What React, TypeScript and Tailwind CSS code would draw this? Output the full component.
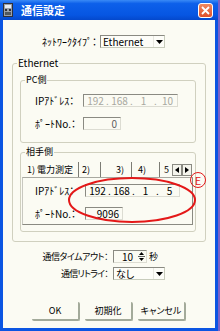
import React from 'react';

const jp = "font-['Noto_Sans_CJK_JP','Noto_Sans',sans-serif] [font-feature-settings:'palt']";

function DownArrow() {
  return (
    <svg width="7" height="4" viewBox="0 0 7 4">
      <path d="M0 0h7L3.5 4z" fill="#000" />
    </svg>
  );
}

function Select({ width, children }: { width: string; children: React.ReactNode }) {
  return (
    <div className={`flex h-[13px] items-stretch border-t border-l border-[#8a8a82] border-b border-r border-b-[#c8ccbc] border-r-[#c8ccbc] bg-[#fdfdf8] ${width}`}>
      <div className="flex flex-1 items-center whitespace-nowrap pl-[2px] leading-[11px]">{children}</div>
      <div className="flex w-[11px] items-center justify-center border-l border-[#e8e8e0]">
        <DownArrow />
      </div>
    </div>
  );
}

function IpField({ parts, disabled }: { parts: string[]; disabled?: boolean }) {
  return (
    <div className={`flex h-[13px] w-[95px] items-center border-t border-l border-[#8a8a82] border-b border-r border-b-[#dcdcd2] border-r-[#dcdcd2] pl-[2px] ${disabled ? 'text-[#a8a8a0]' : 'text-black'}`}>
      {parts.map((p, i) => (
        <React.Fragment key={i}>
          {i > 0 && <span className="w-[5px] text-center">.</span>}
          <span className="w-[19px] text-center">{p}</span>
        </React.Fragment>
      ))}
    </div>
  );
}

function PortField({ value, dim }: { value: string; dim?: boolean }) {
  return (
    <div className={`flex h-[13px] w-[38px] items-center justify-end border-t border-l border-[#8a8a82] border-b border-r border-b-[#dcdcd2] border-r-[#dcdcd2] pr-[3px] ${dim ? 'text-[#606060]' : 'text-black'}`}>
      {value}
    </div>
  );
}

function Button({ children }: { children: React.ReactNode }) {
  return (
    <div className="flex h-[19px] w-[48px] items-center justify-center whitespace-nowrap rounded-[2px] border-r-2 border-b-2 border-[#a3aa9a] text-[9px]">
      {children}
    </div>
  );
}

function Tab({ width, pad, children, last }: { width: string; pad: string; children: React.ReactNode; last?: boolean }) {
  return (
    <div className={`flex h-[15px] items-center overflow-hidden whitespace-nowrap text-[9px] ${last ? '' : 'border-r border-[#7c7c74]'} ${width} ${pad}`}>
      {children}
    </div>
  );
}

export default function App() {
  return (
    <div className={`relative flex h-[331px] w-[220px] overflow-hidden bg-[#7a62c8] text-[10px] leading-[12px] text-black ${jp}`}>
      <div className="flex h-full w-[218px] flex-col">
        {/* title bar */}
        <div className="flex h-[20px] shrink-0 items-center bg-[linear-gradient(180deg,#3a8af6_0%,#0d60ea_18%,#0656e2_75%,#0448cc_100%)] pl-[3px]">
          <svg width="10" height="14" viewBox="0 0 10 14">
            <rect x="0.5" y="0.5" width="9" height="13" fill="#9aa0a8" stroke="#303038" />
            <rect x="2" y="2" width="6" height="3" fill="#e8ecf0" />
            <rect x="2" y="6" width="2" height="2" fill="#303038" />
            <rect x="6" y="6" width="2" height="2" fill="#303038" />
            <rect x="2" y="9" width="6" height="3" fill="#505860" />
          </svg>
          <span className="ml-[8px] text-[11px] font-bold text-white">通信設定</span>
          <div className="ml-auto mr-[5px] flex h-[15px] w-[15px] items-center justify-center rounded-[3px] border border-white bg-[linear-gradient(180deg,#f08a60,#e0502a)]">
            <svg width="9" height="9" viewBox="0 0 9 9">
              <path d="M1 1l7 7M8 1L1 8" stroke="#fff" strokeWidth="1.8" />
            </svg>
          </div>
        </div>

        {/* body */}
        <div className="flex flex-1 flex-col border-x-[3px] border-b-[3px] border-[#0b55e2] bg-[#fbfbf3]">
          <div className="mt-[15px] flex items-center">
            <span className="w-[94px] whitespace-nowrap text-right">ﾈｯﾄﾜｰｸﾀｲﾌﾟ：</span>
            <div className="ml-[3px]">
              <Select width="w-[65px]">Ethernet</Select>
            </div>
          </div>

          <fieldset className="mt-[9px] ml-[9px] w-[194px] rounded-[3px] border border-[#d0d0bf] pb-[9px]">
            <legend className="ml-[4px] px-[1px]">Ethernet</legend>

            <fieldset className="mt-[5px] ml-[7px] w-[176px] rounded-[3px] border border-[#d0d0bf] pb-[12px]">
              <legend className="ml-[4px] px-[1px] text-[9px]">PC側</legend>
              <div className="mt-[8px] flex items-center">
                <span className="ml-[14px] w-[48px] whitespace-nowrap">IPｱﾄﾞﾚｽ：</span>
                <IpField parts={['192', '168', '1', '10']} disabled />
              </div>
              <div className="mt-[10px] flex items-center">
                <span className="ml-[14px] w-[48px] whitespace-nowrap">ﾎﾟｰﾄNo.：</span>
                <PortField value="0" dim />
              </div>
            </fieldset>

            <fieldset className="mt-[3px] ml-[7px] w-[176px] rounded-[3px] border border-[#d0d0bf] pb-[6px]">
              <legend className="ml-[4px] px-[1px] text-[9px]">相手側</legend>
              <div className="mt-[4px] ml-[1px] flex w-[171px] items-center">
                <Tab width="w-[57px]" pad="pl-[5px]">1) 電力測定</Tab>
                <Tab width="w-[22px]" pad="pl-[3px]">2)</Tab>
                <Tab width="w-[31px]" pad="pl-[15px]">3)</Tab>
                <Tab width="w-[28px]" pad="pl-[6px]">4)</Tab>
                <Tab width="w-[12px]" pad="pl-[4px]" last>5</Tab>
                <div className="flex h-[12px] w-[10px] items-center justify-center border border-[#8a8a82] bg-[#f4f4ec]">
                  <svg width="4" height="6" viewBox="0 0 4 6"><path d="M4 0v6L0 3z" fill="#000" /></svg>
                </div>
                <div className="flex h-[12px] w-[10px] items-center justify-center border border-[#8a8a82] bg-[#f4f4ec]">
                  <svg width="4" height="6" viewBox="0 0 4 6"><path d="M0 0v6l4-3z" fill="#000" /></svg>
                </div>
              </div>
              <div className="ml-[1px] w-[171px] border border-t-[#a8a8a0] border-l-[#c8c8c0] border-r-[#8a8a82] border-b-[#8a8a82] pt-[6px] pb-[4px]">
                <div className="flex items-center">
                  <span className="ml-[12px] w-[50px] whitespace-nowrap">IPｱﾄﾞﾚｽ：</span>
                  <IpField parts={['192', '168', '1', '5']} />
                </div>
                <div className="mt-[10px] flex items-center">
                  <span className="ml-[12px] w-[50px] whitespace-nowrap">ﾎﾟｰﾄNo.：</span>
                  <PortField value="9096" />
                </div>
              </div>
            </fieldset>
          </fieldset>

          <div className="mt-[8px] flex items-center">
            <span className="w-[105px] whitespace-nowrap text-right text-[9px] tracking-[-0.5px]">通信タイムアウト：</span>
            <div className="ml-[5px] flex h-[13px] w-[34px] items-stretch border-t border-l border-[#8a8a82] border-b border-r border-b-[#dcdcd2] border-r-[#dcdcd2]">
              <div className="flex flex-1 items-center justify-end pr-[3px]">10</div>
              <div className="flex w-[10px] flex-col items-center justify-center gap-[1px]">
                <svg width="5" height="3" viewBox="0 0 5 3"><path d="M0 3h5L2.5 0z" fill="#000" /></svg>
                <div className="h-px w-[7px] bg-[#606060]" />
                <svg width="5" height="3" viewBox="0 0 5 3"><path d="M0 0h5L2.5 3z" fill="#000" /></svg>
              </div>
            </div>
            <span className="ml-[2px] text-[9px]">秒</span>
          </div>

          <div className="mt-[4px] flex items-center">
            <span className="w-[105px] whitespace-nowrap text-right text-[9px] tracking-[-0.8px]">通信リトライ：</span>
            <div className="ml-[5px]">
              <Select width="w-[52px]">なし</Select>
            </div>
          </div>

          <div className="mt-[22px] ml-[29px] flex gap-[5px]">
            <Button>OK</Button>
            <Button>初期化</Button>
            <Button>キャンセル</Button>
          </div>
        </div>
      </div>

      {/* annotation overlay */}
      <svg className="pointer-events-none absolute left-0 top-0" width="220" height="331" viewBox="0 0 220 331">
        <ellipse cx="132" cy="200" rx="63" ry="22" fill="none" stroke="#e41818" strokeWidth="2" />
      </svg>
      <div className="absolute left-[190px] top-[172px] flex h-[16px] w-[16px] items-center justify-center rounded-full border border-[#e41818] text-[11px] leading-none text-[#e41818]">
        E
      </div>
    </div>
  );
}
